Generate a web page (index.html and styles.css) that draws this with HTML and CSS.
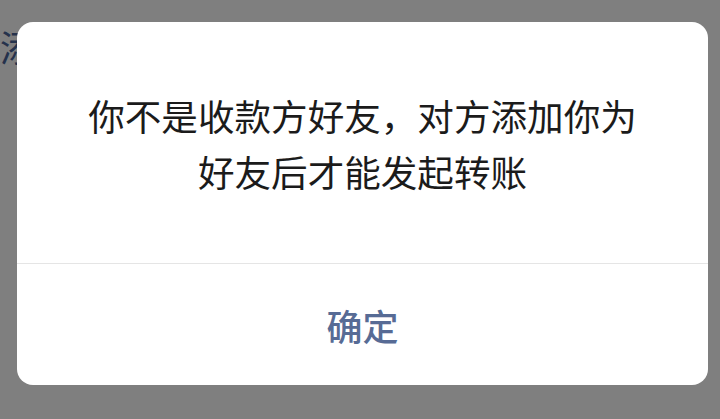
FILE: index.html
```html
<!DOCTYPE html>
<html lang="zh-CN">
<head>
  <meta charset="UTF-8">
  <title>转账提示</title>
  <link rel="stylesheet" href="styles.css">
</head>
<body>

<div class="page">
  <div class="page-text">添</div>
</div>

<div class="mask"></div>

<div class="dialog">
  <div class="dialog-body">
    你不是收款方好友，对方添加你为<br>好友后才能发起转账
  </div>
  <div class="dialog-footer">
    <button class="dialog-btn">确定</button>
  </div>
</div>

</body>
</html>
```

FILE: styles.css
```css
* { box-sizing: border-box; }
html, body {
  margin: 0;
  height: 100%;
}
body {
  font-family: "Noto Sans CJK SC", "Noto Sans", sans-serif;
  background-color: #ffffff;
  overflow: hidden;
}
.page {
  padding-top: 24px;
  padding-left: 0;
}
.page-text {
  font-size: 36px;
  line-height: 44px;
  color: #4a6499;
}
.mask {
  position: fixed;
  inset: 0;
  background-color: rgba(0, 0, 0, 0.5);
}
.dialog {
  position: fixed;
  left: 17px;
  top: 22px;
  width: 691px;
  height: 363px;
  background-color: #fff;
  border-radius: 16px;
  display: flex;
  flex-direction: column;
}
.dialog-body {
  height: 242px;
  padding-top: 66px;
  text-align: center;
  font-size: 36.6px;
  line-height: 56px;
  color: #1b1b1b;
  border-bottom: 1px solid #e5e5e5;
}
.dialog-footer {
  flex: 1;
  display: flex;
  align-items: center;
  justify-content: center;
}
.dialog-btn {
  background: none;
  border: none;
  padding: 0;
  font-family: inherit;
  font-size: 36px;
  font-weight: 500;
  color: #576b95;
}
```
